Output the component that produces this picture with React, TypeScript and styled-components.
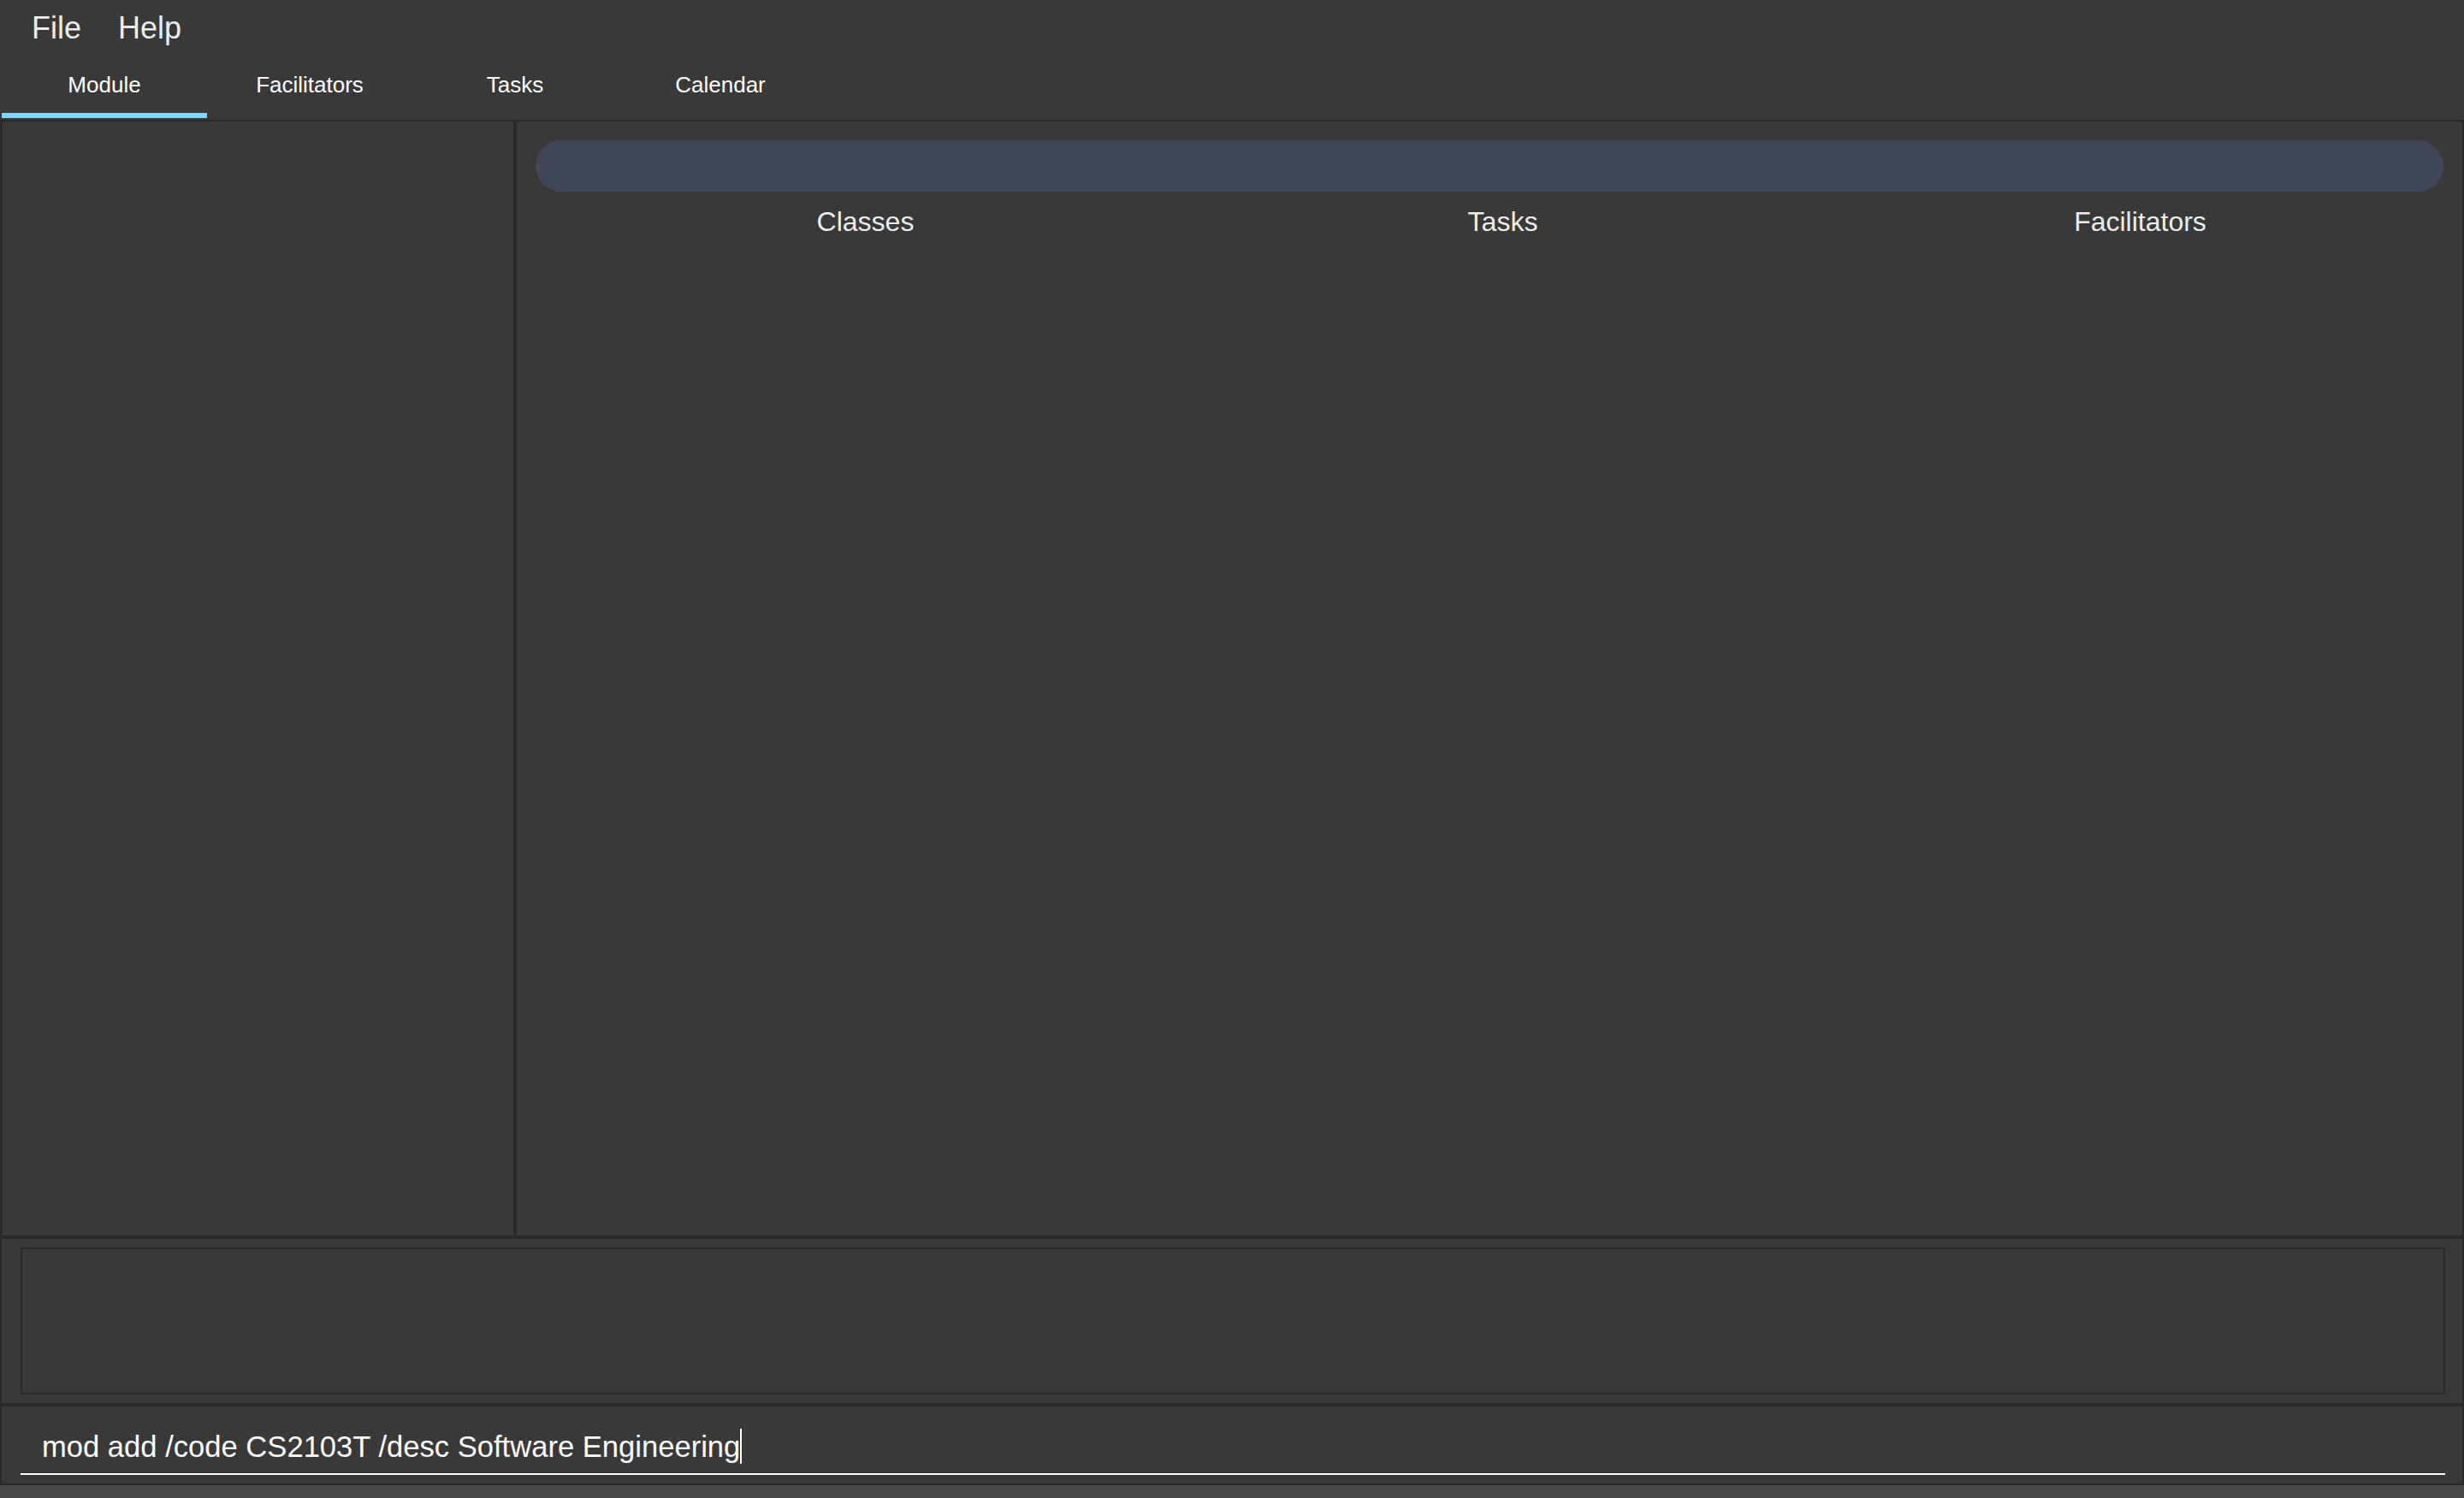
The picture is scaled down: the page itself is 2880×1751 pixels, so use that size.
import React from "react";
import styled, { createGlobalStyle } from "styled-components";

const GlobalStyle = createGlobalStyle`
  html, body {
    margin: 0;
    padding: 0;
    background: #393939;
  }
  body {
    font-family: "Liberation Sans", Arial, sans-serif;
  }
`

const Window = styled.div`
  width: 2880px;
  height: 1751px;
  display: flex;
  flex-direction: column;
  background: #393939;
  color: #ffffff;
  overflow: hidden;
`

const MenuBar = styled.div`
  display: flex;
  height: 66px;
  padding-left: 37px;
  gap: 43px;
  align-items: center;
`

const MenuItem = styled.div`
  font-size: 36px;
  line-height: 66px;
  color: #ececec;
`

const TabBar = styled.div`
  display: flex;
  height: 74px;
  padding-left: 2px;
  box-sizing: border-box;
  padding-bottom: 2px;
`

const Tab = styled.div<{ active?: boolean }>`
  width: 240px;
  display: flex;
  flex-direction: column;
  align-items: center;
  padding-top: 18px;
  box-sizing: border-box;

  &::after {
    content: "";
    margin-top: auto;
    width: 100%;
    height: 6px;
    background: ${(p) => (p.active ? "#80d6ff" : "transparent")};
  }
`

const TabLabel = styled.span`
  font-size: 26px;
  line-height: 30px;
  color: #ffffff;
`

const Main = styled.div`
  display: flex;
  height: 1308px;
  border-top: 2px solid #2a2a2a;
  border-bottom: 4px solid #2a2a2a;
  border-left: 3px solid #2a2a2a;
  border-right: 2px solid #2a2a2a;
  box-sizing: border-box;
`

const SidePanel = styled.div`
  width: 597px;
  border-right: 4px solid #2a2a2a;
`

const DetailPanel = styled.div`
  flex: 1;
  display: flex;
  flex-direction: column;
  padding: 22px 22px 0 22px;
`

const TitlePill = styled.div`
  height: 60px;
  border-radius: 30px;
  background: #414657;
`

const ColumnHeaders = styled.div`
  display: grid;
  grid-template-columns: repeat(3, 1fr);
  margin: 15px -18px 0 13px;
`

const ColumnTitle = styled.div`
  text-align: center;
  font-size: 32px;
  line-height: 40px;
  color: #ececec;
`

const ResultSection = styled.div`
  height: 196px;
  padding: 10px 20px 10px 22px;
  box-sizing: border-box;
  border-left: 2px solid #2a2a2a;
  border-right: 2px solid #2a2a2a;
  border-bottom: 4px solid #2a2a2a;
  display: flex;
`

const ResultBox = styled.div`
  flex: 1;
  border: 2px solid #2a2a2a;
`

const CommandSection = styled.div`
  height: 92px;
  padding: 0 20px 0 22px;
  box-sizing: border-box;
  border-left: 2px solid #2a2a2a;
  border-right: 2px solid #2a2a2a;
  border-bottom: 2px solid #2a2a2a;
`

const CommandBox = styled.div`
  height: 80px;
  box-sizing: border-box;
  padding: 27px 0 0 25px;
  border-bottom: 2px solid #ffffff;
  display: flex;
  align-items: flex-start;
`

const CommandText = styled.span`
  font-size: 34.6px;
  line-height: 41px;
  color: #ffffff;
  white-space: pre;
`

const Caret = styled.span`
  display: inline-block;
  width: 2px;
  height: 41px;
  margin-top: -1px;
  background: #ffffff;
`

const StatusStrip = styled.div`
  flex: 1;
  background: #474747;
`

const tabs = ["Module", "Facilitators", "Tasks", "Calendar"]
const columns = ["Classes", "Tasks", "Facilitators"]

const App = () => {
    return (
        <>
            <GlobalStyle/>
            <Window>
                <MenuBar>
                    <MenuItem>File</MenuItem>
                    <MenuItem>Help</MenuItem>
                </MenuBar>
                <TabBar>
                    {tabs.map((t, i) => (
                        <Tab key={t} active={i === 0}>
                            <TabLabel>{t}</TabLabel>
                        </Tab>
                    ))}
                </TabBar>
                <Main>
                    <SidePanel/>
                    <DetailPanel>
                        <TitlePill/>
                        <ColumnHeaders>
                            {columns.map((c) => (
                                <ColumnTitle key={c}>{c}</ColumnTitle>
                            ))}
                        </ColumnHeaders>
                    </DetailPanel>
                </Main>
                <ResultSection>
                    <ResultBox/>
                </ResultSection>
                <CommandSection>
                    <CommandBox>
                        <CommandText>mod add /code CS2103T /desc Software Engineering</CommandText>
                        <Caret/>
                    </CommandBox>
                </CommandSection>
                <StatusStrip/>
            </Window>
        </>
    )
}
export default App
